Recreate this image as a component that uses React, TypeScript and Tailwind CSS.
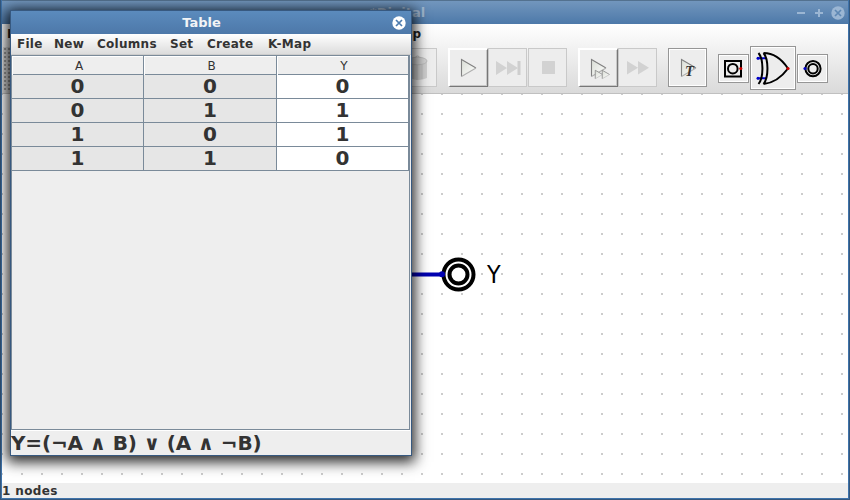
import React from "react";

const TEXT = "font-['DejaVu_Sans','Noto_Sans',sans-serif]";

function CloseIcon({ className, mark }: { className: string; mark: string }) {
  return (
    <svg width="14" height="14" viewBox="0 0 14 14" className={className}>
      <circle cx="7" cy="7" r="6.7" fill="currentColor" />
      <path d="M4 4L10 10M10 4L4 10" stroke={mark} strokeWidth="1.7" />
    </svg>
  );
}

function Play({ x, y, s = 1 }: { x: number; y: number; s?: number }) {
  return (
    <g transform={`translate(${x} ${y}) scale(${s})`}>
      <path d="M0.5 0.5L15 9L0.5 17.5Z" fill="url(#tri)" />
      <path d="M0.5 17.5V0.5L15 9" fill="none" stroke="#808080" strokeWidth={s < 1 ? 1.5 : 1.1} />
      <path d="M15 9L0.5 17.5" fill="none" stroke="#b0b0b0" strokeWidth="1.1" />
    </g>
  );
}

function ToolButton({ kind, children }: { kind: "raised" | "flat" | "plain"; children: React.ReactNode }) {
  const look =
    kind === "raised"
      ? "border-t-2 border-l-2 border-t-white border-l-white border-r border-b border-r-[#777] border-b-[#777] shadow-[inset_-1px_-1px_0_#c8c8c8]"
      : kind === "flat"
        ? "border border-[#c9c9c9]"
        : "border border-[#969696] shadow-[inset_1px_1px_0_#fff,inset_-1px_-1px_0_#fff]";
  const width = kind === "raised" ? "w-10" : "w-[39px]";
  return <div className={`h-[39px] shrink-0 bg-[#ededed] ${width} ${look}`}>{children}</div>;
}

function Tools() {
  return (
    <div className="flex h-[46px] items-start pt-px pl-[396px]">
      <ToolButton kind="flat">
        <svg width="37" height="37">
          <path d="M10 12L11 29Q19 33 28 29V12Z" fill="#cfcfcf" />
          <path d="M14 15V30M18 16V31M23 15V30" stroke="#c2c2c2" strokeWidth="1.2" />
          <ellipse cx="18.5" cy="12" rx="9.5" ry="3.8" fill="#d2d2d2" stroke="#bebebe" />
          <path d="M15.5 9Q18.5 5 21.5 9" stroke="#bcbcbc" fill="none" />
        </svg>
      </ToolButton>
      <div className="ml-[11px] flex gap-0">
        <ToolButton kind="raised">
          <svg width="37" height="36"><Play x={11} y={9} /></svg>
        </ToolButton>
        <ToolButton kind="flat">
          <svg width="37" height="37">
            <path d="M7 12L18 19L7 26ZM18 12L29 19L18 26Z" fill="#d2d2d2" />
            <rect x="28.5" y="12" width="3" height="14" fill="#cecece" />
          </svg>
        </ToolButton>
        <div className="ml-px">
          <ToolButton kind="flat">
            <svg width="37" height="37"><rect x="13" y="12" width="13" height="13" rx="0.5" fill="#d2d2d2" /></svg>
          </ToolButton>
        </div>
      </div>
      <div className="ml-[11px] flex">
        <ToolButton kind="raised">
          <svg width="37" height="36">
            <Play x={11} y={9} />
            <Play x={15} y={20} s={0.5} />
            <Play x={22} y={20} s={0.5} />
          </svg>
        </ToolButton>
        <ToolButton kind="flat">
          <svg width="37" height="37"><path d="M8 12L19 18.7L8 25.5ZM19 12L30 18.7L19 25.5Z" fill="#d2d2d2" /></svg>
        </ToolButton>
      </div>
      <div className="ml-[11px]">
        <ToolButton kind="plain">
          <svg width="37" height="37">
            <Play x={12} y={10} />
            <text x="16" y="27" fontFamily="Liberation Serif, serif" fontSize="14.5" fontWeight="700" fontStyle="italic" fill="#333">T</text>
          </svg>
        </ToolButton>
      </div>
      <div className="-mt-0.5 ml-[11px] flex h-11 items-center gap-px">
        <div className="h-[29px] w-[31px] border border-[#969696] bg-[#ededed] shadow-[inset_0_0_0_1px_#fff]">
          <svg width="29" height="27">
            <rect x="6" y="6" width="16" height="15.5" fill="none" stroke="#000" strokeWidth="2" />
            <circle cx="13.8" cy="13.7" r="4.8" fill="none" stroke="#000" strokeWidth="2" />
            <circle cx="21.8" cy="13.5" r="1.6" fill="#d00000" />
          </svg>
        </div>
        <div className="h-11 w-[46px] border border-[#969696] bg-[#ededed] shadow-[inset_0_0_0_1px_#fff]">
          <svg width="44" height="42">
            <path d="M6 11.2H15M6 31.2H15" stroke="#0000c8" strokeWidth="2" />
            <path d="M7.5 6C12.5 12 13 30 7.5 37M12.5 6C17.5 12 18 30 12.5 37M12.5 6C22 6 30 11 37 21.5C30 31 23 36 12.5 37" fill="none" stroke="#000" strokeWidth="2" />
            <circle cx="7" cy="11.2" r="1.5" fill="#0000c8" />
            <circle cx="7" cy="31.2" r="1.5" fill="#0000c8" />
            <circle cx="37" cy="21.5" r="1.6" fill="#d00000" />
          </svg>
        </div>
        <div className="h-[29px] w-[31px] border border-[#969696] bg-[#ededed] shadow-[inset_0_0_0_1px_#fff]">
          <svg width="29" height="27">
            <circle cx="15" cy="13.7" r="7.6" fill="none" stroke="#000" strokeWidth="2" />
            <circle cx="15" cy="13.7" r="4.7" fill="none" stroke="#000" strokeWidth="2" />
            <circle cx="7" cy="13.5" r="1.6" fill="#0000c8" />
          </svg>
        </div>
      </div>
    </div>
  );
}

const menus = [
  { label: "File", box: "w-[37px]" },
  { label: "New", box: "w-[43px]" },
  { label: "Columns", box: "w-[73px]" },
  { label: "Set", box: "w-[37px]" },
  { label: "Create", box: "w-[61px]" },
  { label: "K-Map", box: "w-[50px]" },
];

const rows = [
  [0, 0, 0],
  [0, 1, 1],
  [1, 0, 1],
  [1, 1, 0],
];

function TableDialog() {
  return (
    <div className="absolute top-[10px] left-[10px] flex h-[446px] w-[402px] flex-col border border-[#375980] bg-[#eee] shadow-[0_3px_13px_3px_rgba(0,0,0,0.85)]">
      <div className="flex h-[23px] shrink-0 items-center bg-linear-to-b from-[#5b8bbd] to-[#4d78a9] pr-[5px]">
        <span className="flex-1 text-center text-[13px] leading-[23px] font-bold text-[#f2f4f6]">Table</span>
        <CloseIcon className="text-white" mark="#4d7caf" />
      </div>
      <div className="flex h-[21px] shrink-0 border-b border-[#ccc] bg-linear-to-b from-white to-[#dcdcdc] pl-[6px] text-[12px] leading-[21px] font-bold tracking-[0.28px] text-[#333]">
        {menus.map((m) => (
          <span key={m.label} className={`shrink-0 whitespace-nowrap ${m.box}`}>{m.label}</span>
        ))}
      </div>
      <div className="mr-px flex h-[375px] shrink-0 flex-col border border-[#7a8a99] shadow-[0_1px_0_#fff]">
        <div className="grid h-[19px] shrink-0 grid-cols-[132px_133px_132px] border-b border-[#7a8a99] text-center text-[12px] leading-[20px] text-[#333]">
          {["A", "B", "Y"].map((h) => (
            <span key={h} className="border-r border-[#7a8a99] pl-[3px] shadow-[inset_1px_1px_0_#fff]">{h}</span>
          ))}
        </div>
        {rows.map((r, i) => (
          <div key={i} className="grid h-6 shrink-0 grid-cols-[132px_133px_132px] border-b border-[#7a8a99] text-center text-[20px] leading-[22px] font-bold text-[#333]">
            {r.map((v, j) => (
              <span key={j} className={`border-r border-[#7a8a99] ${j === 2 ? "bg-white" : "bg-[#e6e6e6]"}`}>{v}</span>
            ))}
          </div>
        ))}
      </div>
      <div className="h-6 text-[20px] leading-[27px] font-bold tracking-[-0.13px] whitespace-nowrap text-[#333]">Y=(¬A ∧ B) ∨ (A ∧ ¬B)</div>
    </div>
  );
}

export default function App() {
  return (
    <div className={`relative h-[500px] w-[850px] overflow-hidden bg-[#34577d] px-px pb-px ${TEXT}`}>
      <div className="flex h-[499px] flex-col border-x border-b border-[#3f73aa] bg-white">
        <svg width="0" height="0" className="absolute">
          <linearGradient id="tri" x1="0" y1="0" x2="1" y2="1">
            <stop stopColor="#d9ddd5" />
            <stop offset="1" stopColor="#fff" />
          </linearGradient>
        </svg>
        <div className="flex h-6 shrink-0 items-center border-t border-[#53718f] bg-linear-to-b from-[#7296bd] to-[#4d79a9] pr-[3px] text-[#a9c0d8]">
          <span className="flex-1 pr-[3px] text-center text-[13px] leading-6 font-bold text-[#9fb6cf]">*Digital</span>
          <svg width="28" height="14" className="mr-[7px] text-[#9bb6d3]">
            <path d="M1 7H9M19 7H27M23 3V11" stroke="currentColor" strokeWidth="2" />
          </svg>
          <CloseIcon className="text-[#9bb6d3]" mark="#5e88b4" />
        </div>
        <div className="flex h-[70px] shrink-0 flex-col border-b border-[#e4e4e4] bg-linear-to-b from-white to-[#dadada]">
          <div className="flex h-[23px] shrink-0 pl-[5px] text-[12px] leading-[20px] font-bold text-[#222]">
            <span className="w-[380px]">F</span>
            <span className="w-[34px] text-right">Help</span>
          </div>
          <div className="relative flex-1 border-b border-[#c0c0c0]">
            <div className="absolute top-0 left-px h-[43px] w-2.5 bg-[#d8d8d8] bg-[radial-gradient(#777_0.6px,transparent_0.9px)] bg-size-[4px_4px]" />
            <Tools />
          </div>
        </div>
        <svg width="846" height="389" className="shrink-0">
          <defs>
            <pattern id="grid" x="-1" y="-1" width="20" height="20" patternUnits="userSpaceOnUse">
              <rect width="2" height="2" fill="#ccc" />
            </pattern>
          </defs>
          <rect width="846" height="389" fill="url(#grid)" />
          <path d="M400 180.5H440" stroke="#0000b0" strokeWidth="4" />
          <circle cx="456.5" cy="180.5" r="15" fill="#fff" stroke="#000" strokeWidth="4" />
          <circle cx="456.5" cy="180.5" r="9" fill="#fff" stroke="#000" strokeWidth="4" />
          <circle cx="440" cy="180.3" r="3" fill="#0000b0" />
          <text transform="translate(485 189) scale(0.93 1)" fontSize="24" fill="#000">Y</text>
        </svg>
        <div className="h-[15px] shrink-0 bg-[#eee] text-[12px] leading-[17px] font-bold tracking-[0.38px] text-[#333]">1 nodes</div>
      </div>
      <TableDialog />
    </div>
  );
}
